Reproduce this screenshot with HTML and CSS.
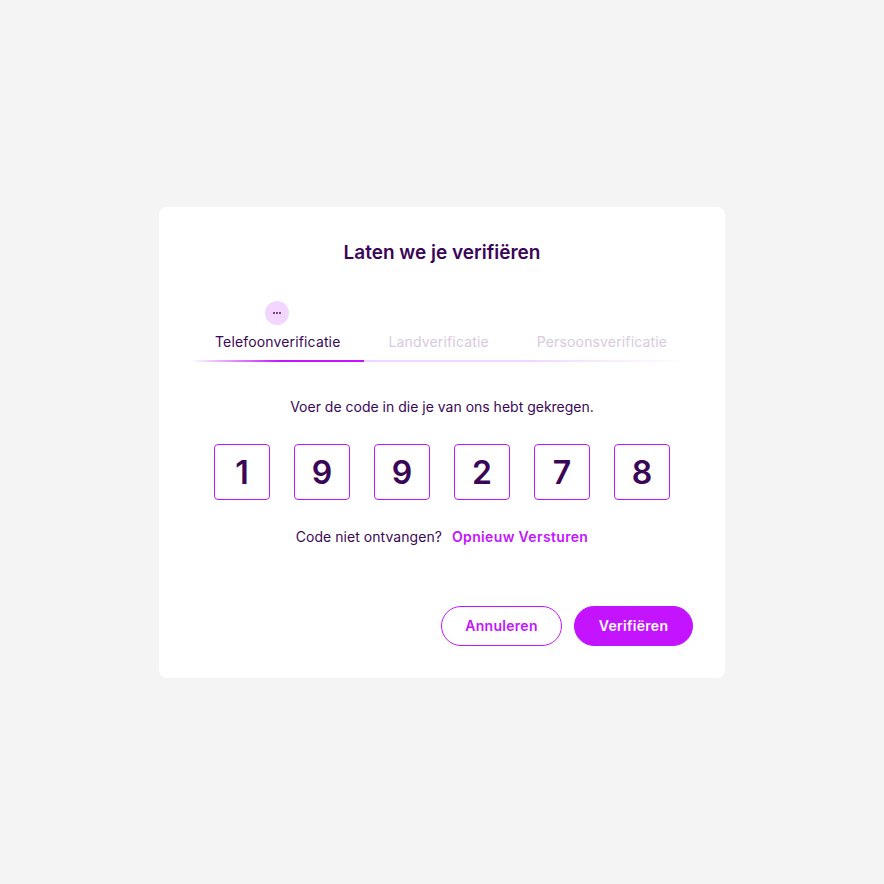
FILE: index.html
```html
<!DOCTYPE html>
<html lang="nl">
<head>
<meta charset="utf-8">
<title>Laten we je verifiëren</title>
<link rel="stylesheet" href="styles.css">
</head>
<body>
<main class="card">
  <h1 class="title">Laten we je verifiëren</h1>
  <div class="steps">
    <div class="step step-active">
      <span class="badge"><svg width="8" height="2" viewBox="0 0 8 2"><circle cx="1" cy="1" r="0.9"/><circle cx="4" cy="1" r="0.9"/><circle cx="7" cy="1" r="0.9"/></svg></span>
      <span class="step-label">Telefoonverificatie</span>
    </div>
    <div class="step"><span class="step-label">Landverificatie</span></div>
    <div class="step"><span class="step-label">Persoonsverificatie</span></div>
  </div>
  <p class="intro">Voer de code in die je van ons hebt gekregen.</p>
  <div class="code">
    <div class="digit">1</div>
    <div class="digit">9</div>
    <div class="digit">9</div>
    <div class="digit">2</div>
    <div class="digit">7</div>
    <div class="digit">8</div>
  </div>
  <p class="resend">Code niet ontvangen? <a class="resend-link" href="#">Opnieuw Versturen</a></p>
  <div class="actions">
    <button class="btn btn-outline" type="button">Annuleren</button>
    <button class="btn btn-solid" type="button">Verifiëren</button>
  </div>
</main>
</body>
</html>
```
FILE: styles.css
```css
* { box-sizing: border-box; }
html, body { height: 100%; }
body {
  margin: 0;
  background: #f4f4f4;
  color: #3a0758;
  font-family: "Inter", "Liberation Sans", sans-serif;
  display: flex;
  align-items: flex-start;
  justify-content: center;
  padding-top: 207px;
}
.card {
  width: 566px;
  height: 471px;
  background: #fff;
  border-radius: 8px;
  padding: 32px;
  display: flex;
  flex-direction: column;
}
.title {
  margin: 0;
  font-size: 19px;
  line-height: 28px;
  font-weight: 600;
  text-align: center;
}
.steps {
  margin-top: 34px;
  height: 61px;
  display: flex;
  justify-content: flex-start;
  border-bottom: 2px solid;
  border-image: linear-gradient(90deg, #fff 0, #c414ff 90px, #c414ff 173px, #f3d6ff 173px, #f3d6ff 340px, #fff 100%) 1;
}
.step {
  position: relative;
  padding: 0 24px 8px;
  display: flex;
  align-items: flex-end;
  height: 59px;
}
.step-label {
  font-size: 14px;
  line-height: 20px;
  letter-spacing: 0.15px;
  white-space: nowrap;
  color: #d8c9e0;
}
.step-active .step-label { color: #3a0758; }
.badge {
  position: absolute;
  left: 74px;
  top: 0;
  width: 24px;
  height: 24px;
  border-radius: 50%;
  background: #f3d6ff;
  display: flex;
  align-items: center;
  justify-content: center;
}
.badge svg { fill: #3a0758; }
.intro {
  margin: 35px 0 0;
  font-size: 14px;
  line-height: 20px;
  text-align: center;
}
.code {
  margin-top: 27px;
  display: flex;
  justify-content: center;
  gap: 24px;
}
.digit {
  width: 56px;
  height: 56px;
  border: 1px solid #c414ff;
  border-radius: 4px;
  display: flex;
  align-items: center;
  justify-content: center;
  font-size: 32px;
  font-weight: 600;
}
.resend {
  margin: 27px 0 0;
  font-size: 14px;
  line-height: 20px;
  letter-spacing: 0.05px;
  text-align: center;
}
.resend-link {
  margin-left: 6px;
  color: #c414ff;
  font-weight: 600;
  letter-spacing: 0.35px;
  text-decoration: none;
}
.actions {
  margin-top: auto;
  display: flex;
  justify-content: flex-end;
  gap: 12px;
}
.btn {
  height: 40px;
  padding: 0 0 1px;
  border-radius: 20px;
  font-family: inherit;
  font-size: 14px;
  font-weight: 600;
  letter-spacing: 0.3px;
  border: 1px solid #c414ff;
}
.btn-outline { width: 121px; background: #fff; color: #c414ff; }
.btn-solid { width: 119px; background: #c414ff; color: #fff; }
```
